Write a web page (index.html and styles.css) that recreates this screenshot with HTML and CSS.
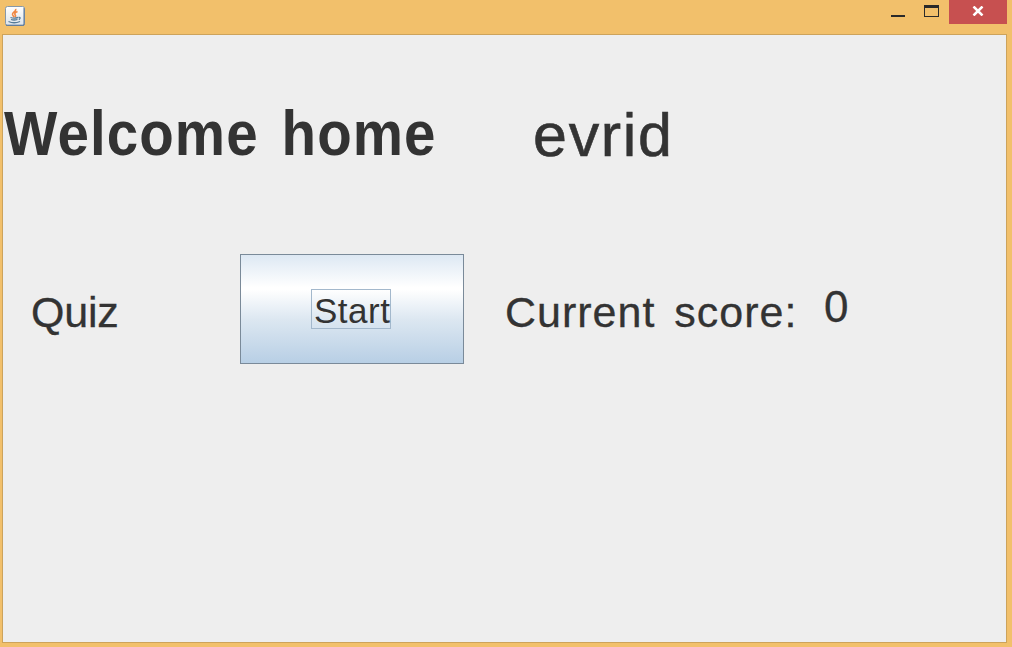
FILE: index.html
```html
<!DOCTYPE html>
<html lang="en">
<head>
<meta charset="utf-8">
<title>Quiz</title>
<link rel="stylesheet" href="styles.css">
</head>
<body>
<div class="window">
  <header class="titlebar">
    <svg class="app-icon" width="20" height="20" viewBox="0 0 20 20">
      <defs><linearGradient id="tile" x1="0" y1="0" x2="0" y2="1"><stop offset="0" stop-color="#fff"/><stop offset="1" stop-color="#dce3ea"/></linearGradient></defs>
      <rect x=".5" y=".5" width="19" height="19" rx="2" fill="url(#tile)" stroke="#8798a8"/>
      <path d="M1 19.2H19V2" fill="none" stroke="#527399" stroke-width="1"/>
      <path d="M10.5 3C12 5 7 6.5 7.5 8.5Q8 10 9.3 11M12.5 5.5C9 7 9.5 8 10.5 9.5Q10.8 10.5 10 11" fill="none" stroke="#ef8743" stroke-width="1.6"/>
      <path d="M5.5 11.5Q9 12.6 13 11.5M6 13.5Q9 14.5 12.5 13.5M3.5 15.5Q9 18 15 15.5M13.5 11.5Q16.5 11 14 13.8" fill="none" stroke="#557b98" stroke-width="1.3"/>
    </svg>
    <div class="controls">
      <svg class="control" width="34" height="24" viewBox="0 0 34 24"><path d="M10 15H24V17H10Z" fill="#2a2a2a"/></svg>
      <svg class="control" width="34" height="24" viewBox="0 0 34 24" shape-rendering="crispEdges"><path fill-rule="evenodd" d="M9 5H24V17H9ZM10 8V16H23V8Z" fill="#2a2a2a"/></svg>
      <div class="close"><svg width="12" height="10" viewBox="0 0 12 10"><path d="M1.5 .5L10.5 9.5M10.5 .5L1.5 9.5" stroke="#fff" stroke-width="2.5"/></svg></div>
    </div>
  </header>
  <main class="content">
    <div class="greeting"><h1 class="welcome">Welcome home</h1><span class="user">evrid</span></div>
    <div class="quiz-row">
      <span class="label quiz">Quiz</span>
      <button class="start"><span class="focus">Start</span></button>
      <span class="label score">Current score:</span>
      <span class="label value">0</span>
    </div>
  </main>
</div>
</body>
</html>
```
FILE: styles.css
```css
* { box-sizing: border-box; }
body { margin: 0; font-family: "Liberation Sans", Arial, sans-serif; color: #333; }
.window { width: 1012px; height: 647px; background: #f2c06b; display: flex; flex-direction: column; padding: 0 5px 4px 2px; overflow: hidden; }
.titlebar { height: 34px; flex: none; display: flex; justify-content: space-between; align-items: flex-start; }
.app-icon { margin: 6px 0 0 3px; }
.controls { display: flex; height: 24px; }
.close { width: 58px; height: 24px; background: #c75050; display: flex; justify-content: center; padding-top: 6px; }
.content { flex: 1; background: #eee; border: 1px solid #cda35b; padding-top: 60px; white-space: nowrap; }
.greeting { display: flex; height: 80px; line-height: 80px; }
.welcome { margin: 0; padding-left: 1px; width: 530px; font-size: 56.5px; letter-spacing: 1.1px; word-spacing: 6px; transform: scaleY(1.11); transform-origin: 0 61px; line-height: 82px; }
.user { font-size: 61px; letter-spacing: 1.7px; -webkit-text-stroke: 0.6px #333; }
.quiz-row { display: flex; height: 110px; margin-top: 79px; }
.label { line-height: 50px; font-size: 43px; margin-top: 33px; -webkit-text-stroke: 0.3px #333; }
.quiz { width: 209px; margin-left: 28px; letter-spacing: -0.2px; }
.start { width: 224px; height: 110px; border: 1px solid #7a8a99; padding: 0; color: inherit; font-family: inherit; background: linear-gradient(#dde8f3 0%, #fff 30%, #fff 32%, #dce7f1 60%, #b8cfe5 100%); display: flex; justify-content: center; align-items: center; }
.focus { width: 80px; height: 40px; font-size: 35px; letter-spacing: 0.5px; border: 1px solid #a3b8cc; text-align: left; padding-left: 2px; margin-right: 2px; line-height: 41px; }
.score { width: 320px; margin-left: 41px; margin-right: -1px; letter-spacing: 1px; word-spacing: 6px; }
.value { font-size: 44px; margin-top: 28px; }
```
